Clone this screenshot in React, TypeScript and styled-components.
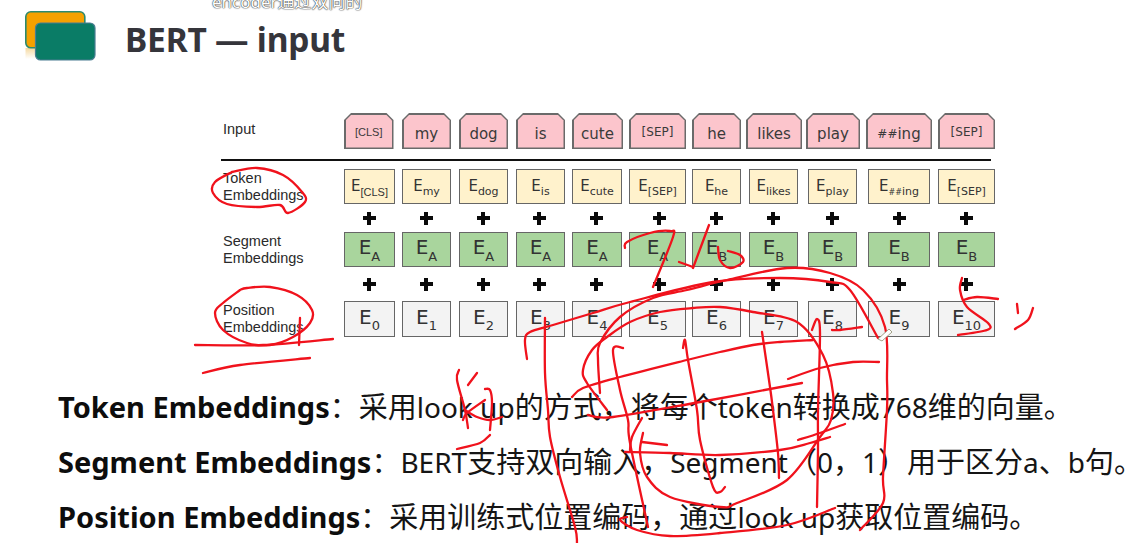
import React from "react";
import styled, { createGlobalStyle } from "styled-components";

const Global = createGlobalStyle`
  html, body { margin: 0; padding: 0; background: #fff; }
`;

const Page = styled.div`
  position: relative;
  width: 1145px;
  height: 543px;
  overflow: hidden;
  background: #fff;
  font-family: "Liberation Sans", Arial, sans-serif;
`;

const Caption = styled.div`
  position: absolute;
  left: 212px;
  top: -12px;
  font: 17px "Noto Sans", "Noto Sans CJK SC", sans-serif;
  color: #fff;
  text-shadow: 0 0 1.5px #222, 0 0 1px #222;
  white-space: nowrap;
`;

const Header = styled.header`
  display: flex;
  align-items: flex-start;
  height: 113px;
  padding: 11px 0 0 25px;
  box-sizing: border-box;
`;

const Logo = styled.svg`
  width: 71px;
  height: 52px;
  flex: none;
`;

const Title = styled.h1`
  margin: 5px 0 0 29px;
  font: 700 33.5px/46px "Noto Sans", "Open Sans", sans-serif;
  color: #35353b;
  letter-spacing: -0.2px;
`;

const Diagram = styled.section`
  display: flex;
  flex-direction: column;
  padding-left: 221px;
  height: 231px;
  box-sizing: border-box;
`;

const Row = styled.div<{ $h?: number }>`
  display: flex;
  align-items: center;
  height: ${(p) => p.$h ?? 36}px;
`;

const Label = styled.div<{ $up?: number }>`
  width: 123px;
  flex: none;
  padding-left: 2px;
  padding-bottom: ${(p) => p.$up ?? 0}px;
  box-sizing: border-box;
  font-size: 14.5px;
  line-height: 17px;
  color: #2a2a2a;
`;

const Cells = styled.div`
  display: flex;
  align-items: stretch;
  height: 100%;
`;

const TagOuter = styled.div<{ $w: number; $ml: number }>`
  width: ${(p) => p.$w}px;
  margin-left: ${(p) => p.$ml}px;
  padding: 1.5px;
  box-sizing: border-box;
  background: #6a6a6a;
  clip-path: polygon(7px 0, calc(100% - 7px) 0, 100% 7px, 100% 100%, 0 100%, 0 7px);
`;

const TagInner = styled.div<{ $small?: boolean; $arial?: boolean }>`
  display: flex;
  align-items: center;
  justify-content: center;
  height: 100%;
  box-sizing: border-box;
  padding-top: ${(p) => (p.$arial || p.$small ? 2 : 5)}px;
  background: #fcc5cc;
  clip-path: polygon(6px 0, calc(100% - 6px) 0, 100% 6px, 100% 100%, 0 100%, 0 6px);
  color: #3a3a3a;
  font-family: ${(p) => (p.$arial ? '"Liberation Sans"' : '"DejaVu Sans"')}, sans-serif;
  font-size: ${(p) => (p.$arial ? 11 : p.$small ? 12 : 15)}px;
  white-space: nowrap;
`;

const Hash = styled.span<{ $size: number }>`
  font-size: ${(p) => p.$size}px;
`;

const Box = styled.div<{ $w: number; $ml: number; $bg: string; $size: number; $up: number }>`
  display: flex;
  align-items: center;
  justify-content: center;
  width: ${(p) => p.$w}px;
  margin-left: ${(p) => p.$ml}px;
  box-sizing: border-box;
  border: 1.5px solid #666;
  padding-bottom: ${(p) => p.$up}px;
  background: ${(p) => p.$bg};
  color: #333;
  font-family: "DejaVu Sans", sans-serif;
  font-size: ${(p) => p.$size}px;
  white-space: nowrap;
`;

const Sub = styled.span<{ $size: number; $drop: number; $arial?: boolean }>`
  font-size: ${(p) => p.$size}px;
  position: relative;
  top: ${(p) => p.$drop}px;
  font-family: ${(p) => (p.$arial ? '"Liberation Sans"' : '"DejaVu Sans"')}, sans-serif;
`;

const Rule = styled.div`
  width: 770px;
  height: 2.5px;
  margin: 9.5px 0 8px;
  background: #111;
`;

const PlusRow = styled.div<{ $h: number }>`
  height: ${(p) => p.$h}px;
  margin-left: 123px;
  display: flex;
  align-items: center;
`;

const Plus = styled.span<{ $ml: number }>`
  position: relative;
  width: 13px;
  height: 13px;
  margin-left: ${(p) => p.$ml}px;
  flex: none;
  &::before, &::after {
    content: "";
    position: absolute;
    background: #0a0a0a;
  }
  &::before { left: 0; right: 0; top: 4.5px; height: 4px; }
  &::after { top: 0; bottom: 0; left: 4.5px; width: 4px; }
`;

const Bullets = styled.ul`
  list-style: none;
  margin: 0;
  padding: 35px 0 0 58px;
`;

const Bullet = styled.li`
  height: 55px;
  font: 400 29px/55px "Noto Sans", "Noto Sans CJK SC", sans-serif;
  color: #151515;
  white-space: nowrap;
`;

const Strong = styled.b`
  font-weight: 700;
  color: #0d0d0d;
`;

const Latin = styled.span`
  font-size: 28px;
`;

const Ink = styled.svg`
  position: absolute;
  inset: 0;
  width: 1145px;
  height: 543px;
  pointer-events: none;
`;

const inputs: [number, number, React.ReactNode, "s" | "a" | "n"][] = [
  [344, 393.5, "[CLS]", "a"], [402, 451, "my", "n"], [459, 508, "dog", "n"], [516, 565, "is", "n"],
  [572, 623, "cute", "n"], [629, 686, "[SEP]", "s"], [692, 741, "he", "n"], [746, 802, "likes", "n"],
  [806, 860, "play", "n"], [866, 932, <><Hash $size={12}>##</Hash>ing</>, "n"], [938, 995, "[SEP]", "s"],
];

const slots: [number, number][] = [
  [344, 395], [402, 451], [459, 508], [516, 565], [572, 622], [629, 686],
  [692, 741], [749, 798], [808, 857], [868, 930], [938, 995],
];

const tokenSubs: React.ReactNode[] = ["[CLS]", "my", "dog", "is", "cute", "[SEP]", "he", "likes", "play", <><Hash $size={8}>##</Hash>ing</>, "[SEP]"];
const segSubs: React.ReactNode[] = ["A", "A", "A", "A", "A", "A", "B", "B", "B", "B", "B"];
const posSubs: React.ReactNode[] = ["0", "1", "2", "3", "4", "5", "6", "7", "8", "9", "10"];
const plusX = [369, 426, 483, 539, 596, 659, 716, 773, 832, 899, 966];

const withMargins = <T extends [number, number, ...unknown[]]>(items: T[], start: number) =>
  items.map((it, i) => ({ it, w: it[1] - it[0], ml: it[0] - (i === 0 ? start : items[i - 1][1]) }));

const strokes: number[][] = [
  [232,172,257,168,283,175,302,192,305,202,288,213,280,205,257,207,227,204,213,193,215,182,232,172],
  [240,290,223,303,215,313,223,330,247,343,270,345,293,337,310,323,312,310,297,295,270,287,247,288,240,290],
  [300,318,299,345],
  [195,345,263,345,333,339],
  [203,373,240,365,310,358],
  [625,248,627,242,650,233,670,231,673,237,653,287],
  [679,262,693,267],
  [693,268,709,225],
  [718,247,720,260,730,268,743,262,740,255,728,251],
  [527,359,525,340,530,332,553,325,593,313,630,302,713,282,780,278,830,282,850,290,878,338],
  [600,393,598,360,600,343,620,317,653,298,687,290,727,280,787,268,830,273,863,290,885,327,887,380,887,410,883,477,883,503,860,530],
  [607,410,587,383,583,370,592,350,607,337,630,322,660,312,693,308,720,307,753,312,797,322,823,355,833,393,831,420,820,437,787,480,737,503,720,507,670,497,647,477,640,453,643,433],
  [572,397,583,388,620,377,687,360,720,352,753,345,780,342,813,340],
  [812,330,817,319,820,333,818,410,818,450,817,507],
  [832,330,840,330,862,327],
  [545,318,545,373,548,410,550,437,560,477,575,527,577,543],
  [623,348,613,350,620,390,628,420,630,443,648,527],
  [627,517,620,520,637,530,670,536,720,533,787,525,835,508],
  [683,348,685,340,688,360,697,410,700,440,713,487,720,492,725,487],
  [762,332,770,387,773,410,778,453,779,478],
  [588,415,613,417,700,402,802,383],
  [788,379,820,368,853,362,879,362],
  [798,440,820,433,845,424],
  [625,452,670,453,720,455,780,450,810,443,830,437],
  [642,442,667,445],
  [642,418,632,437,630,450],
  [459,370,457,380,465,410,468,428],
  [477,373,468,385],
  [485,389,490,390,492,403,490,430],
  [485,400,467,413,463,420],
  [465,410,477,417,490,420,502,417],
  [490,435,480,443,457,449],
  [962,278,960,290,967,307,988,323,987,330,958,335],
  [963,300,977,297,998,299],
  [1017,304,1018,313],
  [1033,308,1028,320,1015,329],
];

const smooth = (a: number[]) => {
  const p: [number, number][] = [];
  for (let i = 0; i < a.length; i += 2) p.push([a[i], a[i + 1]]);
  let d = `M${p[0][0]} ${p[0][1]}`;
  for (let i = 0; i < p.length - 1; i++) {
    const p0 = p[Math.max(0, i - 1)], p1 = p[i], p2 = p[i + 1], p3 = p[Math.min(p.length - 1, i + 2)];
    const c1x = p1[0] + (p2[0] - p0[0]) / 6, c1y = p1[1] + (p2[1] - p0[1]) / 6;
    const c2x = p2[0] - (p3[0] - p1[0]) / 6, c2y = p2[1] - (p3[1] - p1[1]) / 6;
    d += `C${c1x} ${c1y} ${c2x} ${c2y} ${p2[0]} ${p2[1]}`;
  }
  return d;
};

const BoxRow = ({ subs, bg, size, subSize, up, drop }: { subs: React.ReactNode[]; bg: string; size: number; subSize: number; up: number; drop: number }) => (
  <Cells>
    {withMargins(slots, 344).map(({ w, ml }, i) => (
      <Box key={i} $w={w} $ml={ml} $bg={bg} $size={size} $up={up}>
        E<Sub $size={subSize} $drop={drop} $arial={subs[i] === "[CLS]"}>{subs[i]}</Sub>
      </Box>
    ))}
  </Cells>
);

const Pluses = ({ h }: { h: number }) => (
  <PlusRow $h={h}>
    {plusX.map((x, i) => (
      <Plus key={i} $ml={i === 0 ? x - 344 - 6.5 : x - plusX[i - 1] - 13} />
    ))}
  </PlusRow>
);

export default function App() {
  return (
    <Page>
      <Global />
      <Caption>encoder通过双向的</Caption>
      <Header>
        <Logo viewBox="0 0 71 52">
          <defs>
            <linearGradient id="fade" x1="0" y1="0" x2="0" y2="1">
              <stop offset="0" stopColor="#f5d9a0" />
              <stop offset="1" stopColor="#ffffff" />
            </linearGradient>
          </defs>
          <rect x="0.5" y="37" width="10" height="11" fill="url(#fade)" />
          <rect x="0.8" y="0.8" width="59" height="36" rx="5" fill="#f5a100" stroke="#2b8a6e" strokeWidth="1.6" />
          <rect x="10.5" y="12" width="59.5" height="37" rx="5" fill="#0a7c66" stroke="#4a7d92" strokeWidth="1.2" />
        </Logo>
        <Title>BERT — input</Title>
      </Header>
      <Diagram>
        <Row>
          <Label $up={3}>Input</Label>
          <Cells>
            {withMargins(inputs, 344).map(({ it, w, ml }, i) => (
              <TagOuter key={i} $w={w} $ml={ml}>
                <TagInner $arial={it[3] === "a"} $small={it[3] === "s"}>{it[2]}</TagInner>
              </TagOuter>
            ))}
          </Cells>
        </Row>
        <Rule />
        <Row $h={35}>
          <Label>Token<br />Embeddings</Label>
          <BoxRow subs={tokenSubs} bg="#fff2cc" size={15} subSize={11} up={2} drop={6} />
        </Row>
        <Pluses h={28} />
        <Row $h={35}>
          <Label>Segment<br />Embeddings</Label>
          <BoxRow subs={segSubs} bg="#a9d59d" size={20} subSize={13} up={5} drop={9} />
        </Row>
        <Pluses h={34} />
        <Row>
          <Label>Position<br />Embeddings</Label>
          <BoxRow subs={posSubs} bg="#f3f3f3" size={20} subSize={13} up={5} drop={9} />
        </Row>
      </Diagram>
      <Bullets>
        <Bullet><Strong>Token Embeddings</Strong>：采用<Latin>look up</Latin>的方式，将每个<Latin>token</Latin>转换成<Latin>768</Latin>维的向量。</Bullet>
        <Bullet><Strong>Segment Embeddings</Strong>：<Latin>BERT</Latin>支持双向输入，<Latin>Segment</Latin>（<Latin>0</Latin>，<Latin>1</Latin>）用于区分<Latin>a</Latin>、<Latin>b</Latin>句。</Bullet>
        <Bullet><Strong>Position Embeddings</Strong>：采用训练式位置编码，通过<Latin>look up</Latin>获取位置编码。</Bullet>
      </Bullets>
      <Ink viewBox="0 0 1145 543">
        <g fill="none" stroke="#f0121c" strokeWidth="2.3" strokeLinecap="round" strokeLinejoin="round">
          {strokes.map((s, i) => <path key={i} d={smooth(s)} />)}
        </g>
        <path d="M878 339 L889 329 L892 332 L882 341 Z" fill="#fff" stroke="#8a8a6a" strokeWidth="0.8" />
      </Ink>
    </Page>
  );
}
